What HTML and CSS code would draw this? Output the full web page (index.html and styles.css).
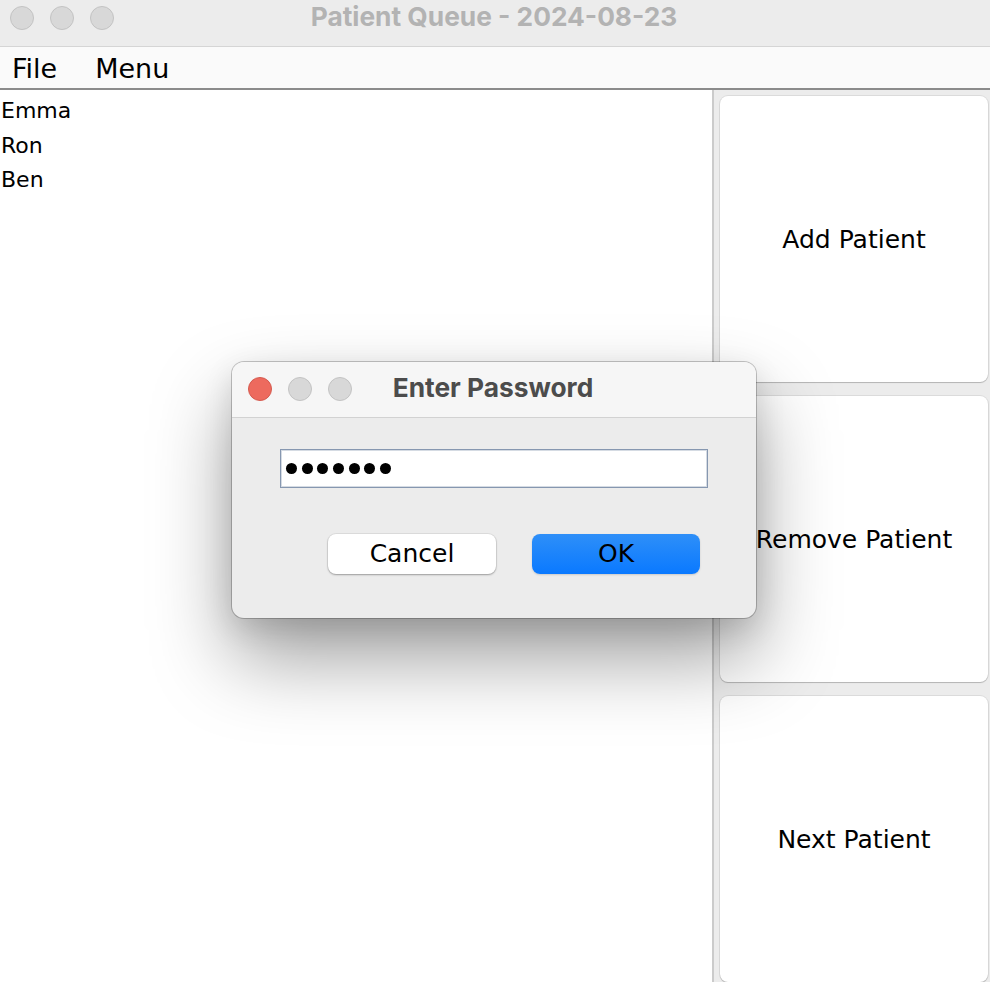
FILE: index.html
```html
<!DOCTYPE html>
<html>
<head>
<meta charset="utf-8">
<title>Patient Queue - 2024-08-23</title>
<link rel="stylesheet" href="styles.css">
</head>
<body>
<div class="window">
  <div class="titlebar">
    <div class="lights">
      <span class="light"></span>
      <span class="light"></span>
      <span class="light"></span>
    </div>
    <div class="title">Patient Queue - 2024-08-23</div>
  </div>
  <div class="menubar">
    <span class="menu-item">File</span>
    <span class="menu-item">Menu</span>
  </div>
  <div class="main">
    <ul class="queue">
      <li>Emma</li>
      <li>Ron</li>
      <li>Ben</li>
    </ul>
    <div class="actions">
      <button class="action">Add Patient</button>
      <button class="action">Remove Patient</button>
      <button class="action">Next Patient</button>
    </div>
  </div>
</div>

<div class="dialog">
  <div class="dialog-titlebar">
    <div class="lights">
      <span class="light close"></span>
      <span class="light"></span>
      <span class="light"></span>
    </div>
    <div class="dialog-title">Enter Password</div>
  </div>
  <div class="dialog-body">
    <div class="password-field">
      <span class="dot"></span><span class="dot"></span><span class="dot"></span><span class="dot"></span><span class="dot"></span><span class="dot"></span><span class="dot"></span>
    </div>
    <div class="dialog-buttons">
      <button class="btn btn-cancel">Cancel</button>
      <button class="btn btn-ok">OK</button>
    </div>
  </div>
</div>
</body>
</html>
```

FILE: styles.css
```css
* { box-sizing: border-box; }

html, body {
  margin: 0;
  padding: 0;
}

body {
  width: 990px;
  height: 982px;
  overflow: hidden;
  position: relative;
  background: #ffffff;
  font-family: "DejaVu Sans", "Liberation Sans", sans-serif;
  color: #000;
}

.window {
  display: flex;
  flex-direction: column;
  height: 982px;
}

/* ---------- title bar ---------- */
.titlebar {
  position: relative;
  height: 47px;
  flex: 0 0 47px;
  background: #ececec;
  border-bottom: 1px solid #d5d5d5;
  display: flex;
  align-items: center;
  justify-content: center;
}

.titlebar .lights {
  position: absolute;
  left: 10px;
  top: 6px;
}

.lights {
  display: flex;
  gap: 16px;
}

.light {
  width: 24px;
  height: 24px;
  border-radius: 50%;
  background: #d8d8d8;
  border: 1px solid #c3c3c3;
  display: block;
}

.title {
  font-family: "Inter", "Liberation Sans", sans-serif;
  font-weight: 700;
  font-size: 26.3px;
  line-height: 1;
  color: #b3b3b3;
  margin-top: -12px;
  margin-left: -2px;
}

/* ---------- menu bar ---------- */
.menubar {
  height: 43px;
  flex: 0 0 43px;
  background: #fafafa;
  border-bottom: 2px solid #8b8b8b;
  display: flex;
  align-items: center;
  padding-left: 12px;
  gap: 38px;
  font-size: 27px;
}

.menu-item {
  line-height: 1;
  margin-top: 1px;
}

/* ---------- main ---------- */
.main {
  flex: 1;
  display: flex;
  min-height: 0;
}

.queue {
  list-style: none;
  margin: 0;
  padding: 4px 0 0 1px;
  width: 714px;
  flex: 0 0 714px;
  background: #fff;
  border-right: 2px solid #cbcbcb;
  font-size: 22px;
}

.queue li {
  line-height: 34.5px;
}

.actions {
  flex: 1;
  background: #ececec;
  padding: 6px 2px 0 6px;
  display: flex;
  flex-direction: column;
  gap: 14px;
}

.action {
  height: 286px;
  flex: 0 0 286px;
  background: #ffffff;
  border: none;
  border-radius: 8px;
  box-shadow: 0 0 0 1px rgba(0,0,0,0.07), 0 1px 1px rgba(0,0,0,0.18);
  font-family: "DejaVu Sans", "Liberation Sans", sans-serif;
  font-size: 25px;
  color: #000;
  padding: 0;
}

/* ---------- dialog ---------- */
.dialog {
  position: absolute;
  left: 232px;
  top: 362px;
  width: 524px;
  height: 256px;
  border-radius: 12px;
  background: #ececec;
  box-shadow: 0 0 0 1px rgba(0,0,0,0.22), 0 40px 80px rgba(0,0,0,0.38), 0 10px 30px rgba(0,0,0,0.12);
  overflow: hidden;
  display: flex;
  flex-direction: column;
}

.dialog-titlebar {
  position: relative;
  height: 56px;
  flex: 0 0 56px;
  background: #f6f6f6;
  border-bottom: 1px solid #d2d2d2;
  display: flex;
  align-items: center;
  justify-content: center;
}

.dialog-titlebar .lights {
  position: absolute;
  left: 16px;
  top: 15px;
}

.light.close {
  background: #ed6a5e;
  border-color: #d45a4f;
}

.dialog-title {
  font-family: "Inter", "Liberation Sans", sans-serif;
  font-weight: 700;
  font-size: 26.3px;
  line-height: 1;
  color: #4c4c4c;
  margin-top: -2px;
  margin-left: -2px;
}

.dialog-body {
  flex: 1;
  padding: 31px 48px 0 48px;
}

.password-field {
  height: 39px;
  width: 428px;
  background: #fff;
  border: 1px solid #8697b0;
  box-shadow: inset 0 0 0 1px rgba(134,151,176,0.35);
  display: flex;
  align-items: center;
  padding-left: 5px;
  gap: 4.7px;
}

.dot {
  width: 11px;
  height: 11px;
  border-radius: 50%;
  background: #000;
  display: block;
}

.dialog-buttons {
  display: flex;
  justify-content: flex-end;
  gap: 36px;
  margin-top: 46px;
  padding-right: 8px;
}

.btn {
  width: 168px;
  height: 40px;
  border-radius: 8px;
  border: none;
  font-family: "DejaVu Sans", "Liberation Sans", sans-serif;
  font-size: 25px;
  color: #000;
  padding: 0 0 2px 0;
}

.btn-cancel {
  background: #ffffff;
  box-shadow: 0 0 0 1px rgba(0,0,0,0.06), 0 1px 2px rgba(0,0,0,0.3);
}

.btn-ok {
  background: linear-gradient(to bottom, #2e8ff8, #0a79ff);
  box-shadow: 0 1px 2px rgba(0,0,0,0.15);
}
```
